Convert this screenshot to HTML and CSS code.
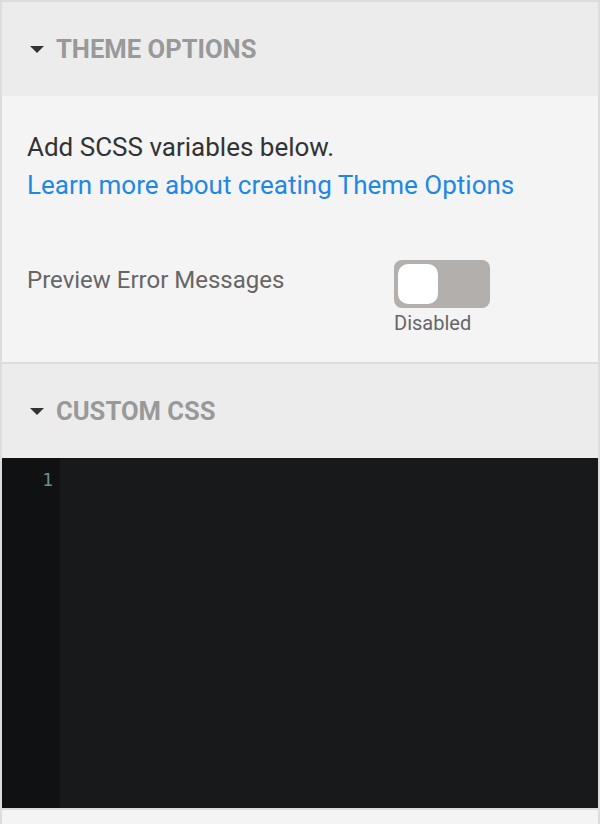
FILE: index.html
```html
<!DOCTYPE html>
<html lang="en">

<head>
    <meta charset="UTF-8">
    <meta name="viewport" content="width=device-width, initial-scale=1.0">
    <title>Theme Options</title>
    <link rel="stylesheet" href="styles.css">
</head>

<body>
    <div class="panel">
        <div class="section-header">
            <span class="caret"></span>
            <h2>Theme Options</h2>
        </div>
        <div class="section-body">
            <p class="intro">Add SCSS variables below.</p>
            <a class="learn-link" href="#">Learn more about creating Theme Options</a>
            <div class="option-row">
                <label for="previewErrors">Preview Error Messages</label>
                <div class="toggle-group">
                    <div class="toggle" id="previewErrors">
                        <span class="knob"></span>
                    </div>
                    <span class="toggle-state">Disabled</span>
                </div>
            </div>
        </div>
        <div class="section-header">
            <span class="caret"></span>
            <h2>Custom CSS</h2>
        </div>
        <div class="editor">
            <div class="gutter">
                <span class="line-no">1</span>
            </div>
            <div class="code"></div>
        </div>
        <div class="footer"></div>
    </div>
</body>

</html>
```

FILE: styles.css
```css
body {
    font-family: Roboto, "Liberation Sans", sans-serif;
    background-color: #ffffff;
    margin: 0;
    padding: 0;
}

.panel {
    display: flex;
    flex-direction: column;
    width: 600px;
    min-height: 824px;
    border: 2px solid #dddddd;
    border-bottom: none;
    box-sizing: border-box;
}

.section-header {
    display: flex;
    align-items: center;
    gap: 12px;
    height: 94px;
    padding-left: 28px;
    background-color: #ececec;
}

.section-header h2 {
    margin: 0;
    font-size: 25.6px;
    font-weight: 700;
    text-transform: uppercase;
    color: #999999;
}

.caret {
    width: 0;
    height: 0;
    border-left: 7px solid transparent;
    border-right: 7px solid transparent;
    border-top: 7px solid #333333;
}

.section-body {
    display: flex;
    flex-direction: column;
    padding: 32px 25px 24px;
    background-color: #f4f4f4;
    border-bottom: 2px solid #dddddd;
}

.intro {
    margin: 0;
    font-size: 26px;
    line-height: 38px;
    color: #333333;
}

.learn-link {
    font-size: 26px;
    line-height: 38px;
    color: #1e88e5;
    text-decoration: none;
}

.option-row {
    display: grid;
    grid-template-columns: 367px auto;
    margin-top: 56px;
}

.option-row label {
    font-size: 24px;
    line-height: 40px;
    color: #666666;
}

.toggle-group {
    display: flex;
    flex-direction: column;
    align-items: flex-start;
}

.toggle {
    width: 96px;
    height: 48px;
    padding: 4px;
    box-sizing: border-box;
    border-radius: 8px;
    background-color: #b3afac;
}

.knob {
    display: block;
    width: 40px;
    height: 40px;
    border-radius: 10px;
    background-color: #ffffff;
}

.toggle-state {
    font-size: 20px;
    line-height: 30px;
    color: #666666;
}

.editor {
    display: flex;
    height: 350px;
    background-color: #18191b;
    border-bottom: 2px solid #dddddd;
}

.gutter {
    width: 58px;
    padding-top: 11px;
    padding-right: 7px;
    box-sizing: border-box;
    text-align: right;
    background-color: #101113;
}

.line-no {
    font-family: "DejaVu Sans Mono", monospace;
    font-size: 18px;
    color: #6f8e89;
}

.code {
    flex: 1;
}

.footer {
    flex: 1;
    background-color: #f4f4f4;
}
```
